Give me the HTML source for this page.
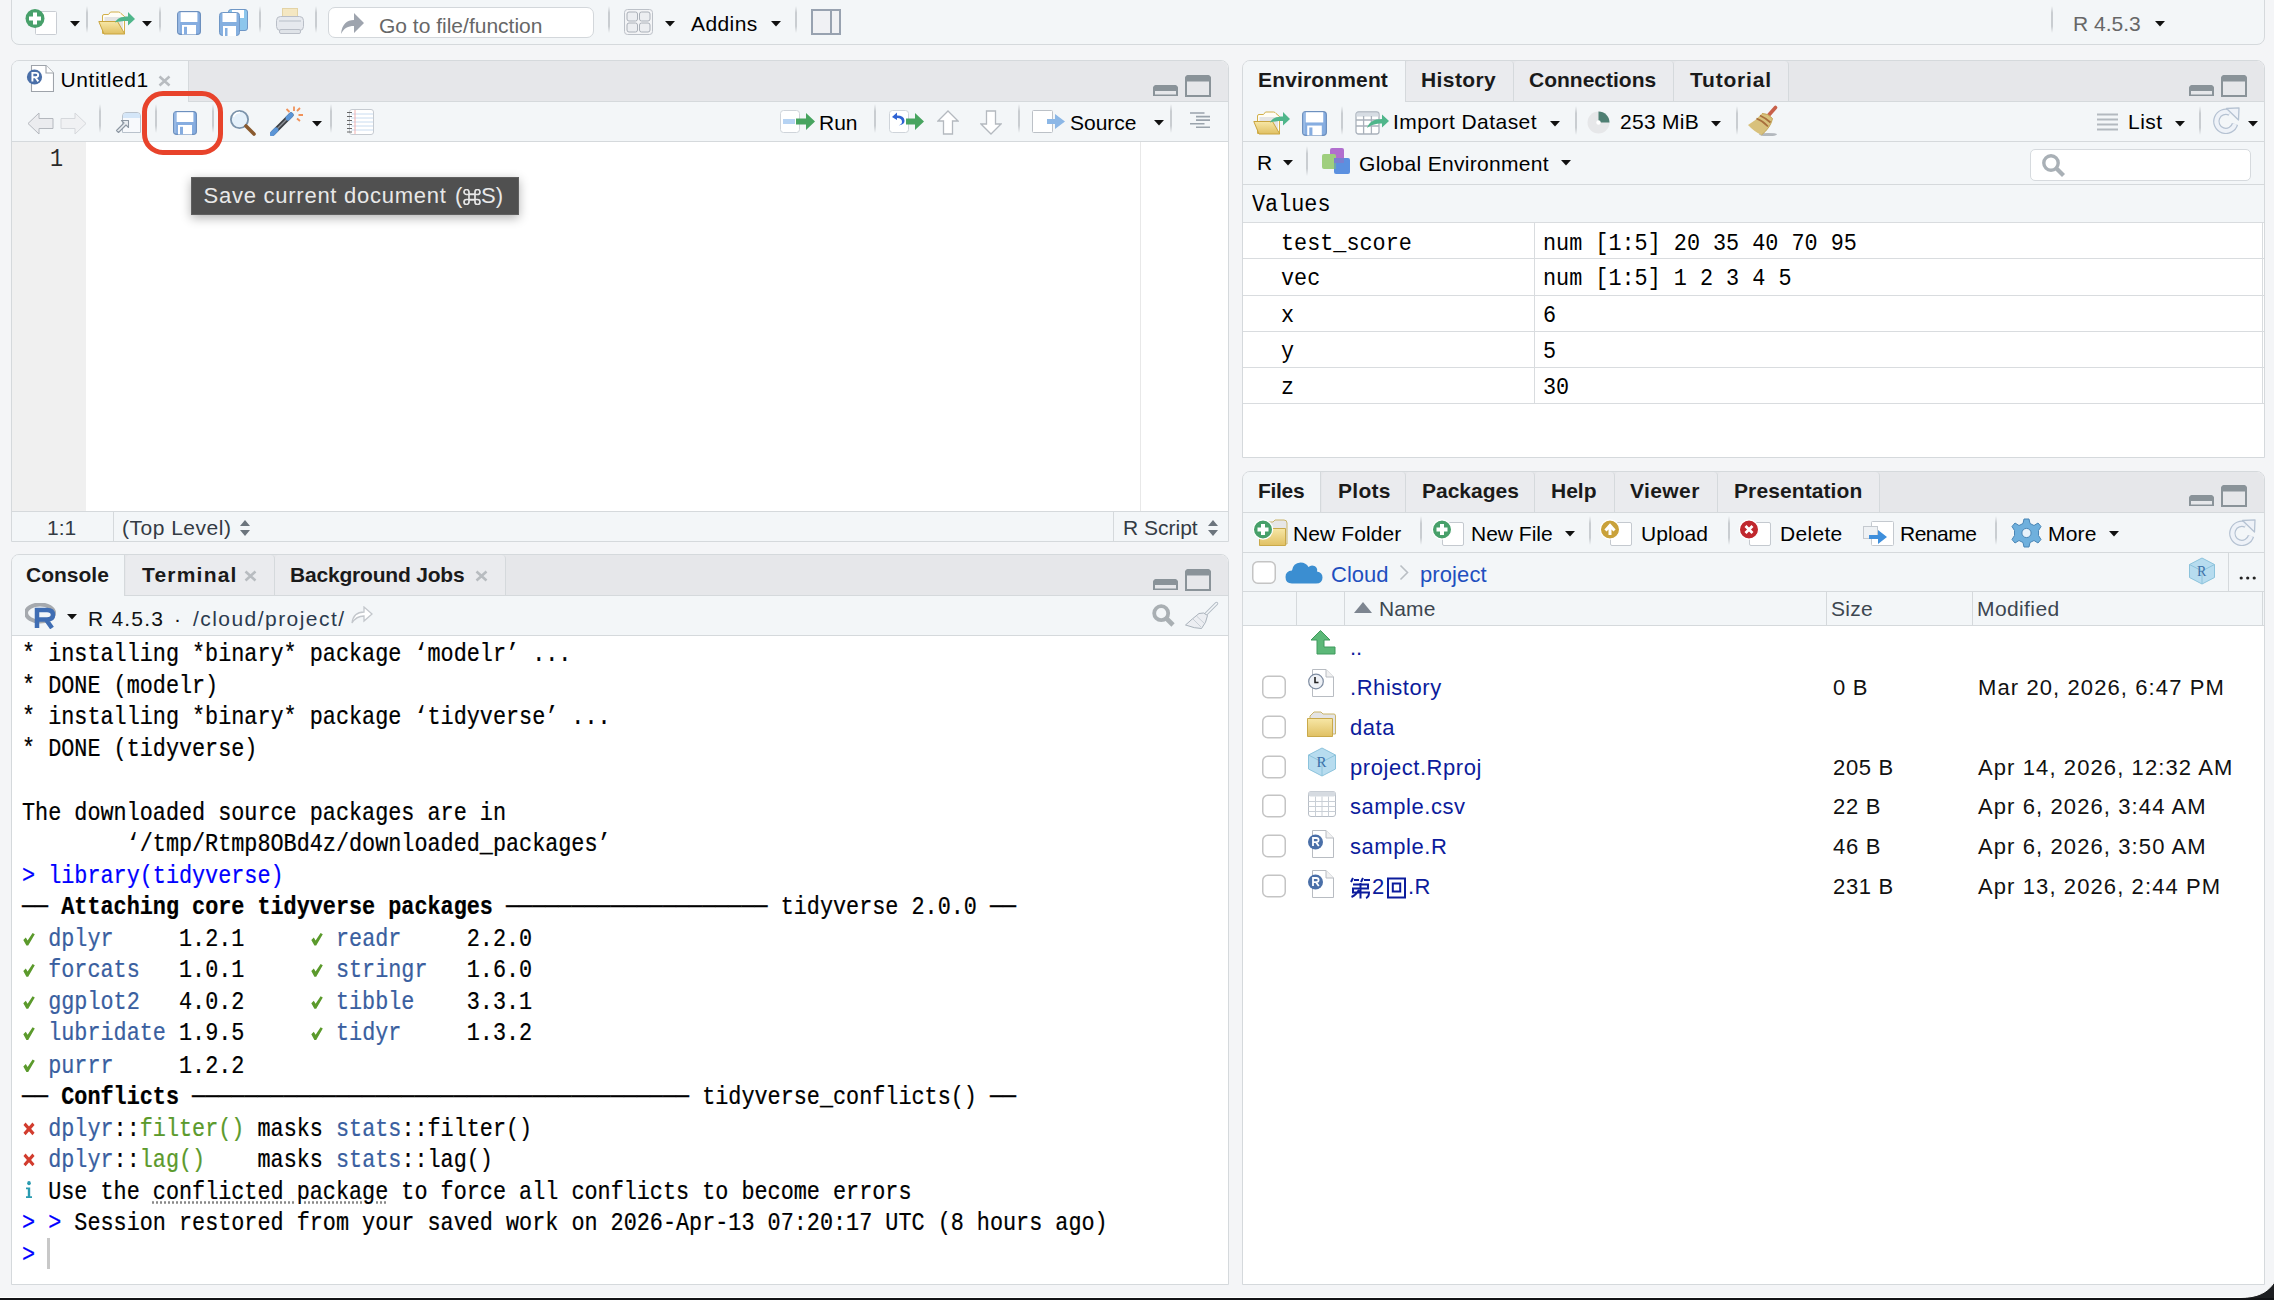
<!DOCTYPE html>
<html><head><meta charset="utf-8">
<style>
*{box-sizing:border-box;margin:0;padding:0}
html,body{width:2274px;height:1300px;overflow:hidden}
body{position:relative;background:#f4f5f7;font-family:"Liberation Sans",sans-serif;font-size:20px;color:#000}
.a{position:absolute}
.mono{font-family:"Liberation Mono",monospace}
.pane{position:absolute;border:1px solid #d5d9dc;background:#fff;overflow:hidden}
.tabbar{position:absolute;left:0;right:0;top:0;background:#e6e7ea;border-bottom:1px solid #d5d9dc}
.tb{position:absolute;left:0;right:0;background:#f3f6f8;border-bottom:1px solid #d5d9dc}
.tab{position:absolute;top:0;bottom:-1px;font-weight:bold;font-size:20px;color:#1a1a1a;border-right:1px solid #d5d9dc;background:#e6e7ea}
.tab.act{background:#f3f6f8}
.sep{position:absolute;width:2px;background:linear-gradient(#f3f6f8,#c9cdd1 25%,#c9cdd1 75%,#f3f6f8)}
.t{position:absolute;white-space:pre}

.con{position:absolute;left:22px;top:638.5px;-webkit-text-stroke:0.2px currentColor;font-family:"Liberation Mono",monospace;font-size:21.8px;line-height:27.5px;white-space:pre;color:#000;transform:scaleY(1.15);transform-origin:0 0}
.con b{font-weight:bold}
.con u{text-decoration:underline dotted #888;text-underline-offset:3px}
.ck{display:inline-block;position:relative;width:13.08px;height:12px;font-style:normal}

.envt{position:absolute;font-size:21.8px;line-height:32.3px;white-space:pre;color:#000;transform:scaleY(1.12);transform-origin:0 0}
</style></head>
<body>

<svg width="0" height="0" style="position:absolute">
<defs>
 <linearGradient id="gFolder" x1="0" y1="0" x2="0" y2="1"><stop offset="0" stop-color="#f7e7a6"/><stop offset="1" stop-color="#e0c063"/></linearGradient>
 <symbol id="caret" viewBox="0 0 10 6"><path d="M0 0H10L5 5.5Z" fill="#111"/></symbol>
 <symbol id="floppy" viewBox="0 0 24 24"><rect x="0.6" y="0.6" width="22.8" height="22.8" rx="3.2" fill="#86ade0" stroke="#6d90be" stroke-width="1.2"/><rect x="3.6" y="1.2" width="16.8" height="9.8" fill="#fff"/><rect x="5" y="14" width="14" height="9.4" fill="#fff"/><rect x="7" y="15.8" width="3" height="7.6" fill="#86ade0"/><rect x="1.5" y="1.2" width="1" height="21" fill="#a9c6ea"/></symbol>

 <symbol id="minbtn" viewBox="0 0 25 11"><path d="M1 10.5V4Q1 1 4 1H21Q24 1 24 4V10.5Z" fill="none" stroke="#8a9399" stroke-width="2"/><path d="M1 5V4Q1 1 4 1H21Q24 1 24 4V5Z" fill="#8a9399" stroke="#8a9399" stroke-width="2"/></symbol>
 <symbol id="maxbtn" viewBox="0 0 26 22"><path d="M1 21V4Q1 1 4 1H22Q25 1 25 4V21Z" fill="none" stroke="#8a9399" stroke-width="2"/><path d="M1 5.5V4Q1 1 4 1H22Q25 1 25 4V5.5Z" fill="#8a9399" stroke="#8a9399" stroke-width="2"/></symbol>
 <symbol id="rdoc" viewBox="0 0 28 28"><path d="M5.5 1.5H20L27.5 9V27.5H5.5Z" fill="#fff" stroke="#9ea3aa" stroke-width="1.1"/><path d="M20 1.5V9H27.5" fill="#fff" stroke="#9ea3aa" stroke-width="1.1"/><circle cx="8.5" cy="13" r="7.6" fill="#4a6fa8"/><path d="M6.4 17.4V8.9H9.6Q12.2 8.9 12.2 11.1Q12.2 13.3 9.6 13.3H6.4M9.3 13.3L12.3 17.4" fill="none" stroke="#fff" stroke-width="1.9"/></symbol>
 <symbol id="updown" viewBox="0 0 10 16"><path d="M0 6L5 0L10 6Z M0 10L5 16L10 10Z" fill="#6c757d"/></symbol>

 <symbol id="chk" viewBox="0 0 12 12"><path d="M0.3 6.8L2.8 4.6L4.6 7.2L9.6 0.6L11.8 1.8L5.2 11.6H3.4Z" fill="#5b9a2c"/></symbol>
 <symbol id="xx" viewBox="0 0 12 12"><path d="M1.5 1.5L10.5 10.5M10.5 1.5L1.5 10.5" stroke="#d23c2e" stroke-width="3"/></symbol>
 <symbol id="closex" viewBox="0 0 13 12"><path d="M1.5 1.5L11.5 10.5M11.5 1.5L1.5 10.5" stroke="#b8bcc0" stroke-width="2.6"/></symbol>

 <symbol id="cbox" viewBox="0 0 24 23"><rect x="0.75" y="0.75" width="22.5" height="21.5" rx="5" fill="#fff" stroke="#c4c4c4" stroke-width="1.5"/></symbol>
 <symbol id="docpg" viewBox="0 0 26 28"><path d="M4.5 0.5H18L25.5 8V27.5H4.5Z" fill="#fff" stroke="#b8bcc2"/><path d="M18 0.5V8H25.5" fill="#f1f1f1" stroke="#b8bcc2"/></symbol>
 <symbol id="refresh" viewBox="0 0 28 27"><path d="M23 17A9.5 9.5 0 1 1 18 5.8" fill="none" stroke="#b5c2d2" stroke-width="6.5"/><path d="M23 17A9.5 9.5 0 1 1 18 5.8" fill="none" stroke="#eef2f8" stroke-width="4"/><path d="M14.5 1.5L27 0.8L26.5 13Z" fill="#eef2f8" stroke="#b5c2d2" stroke-width="1.3" stroke-linejoin="round"/></symbol>
 <symbol id="sep" viewBox="0 0 2 28"><rect width="2" height="28" fill="#d6d9dc"/></symbol>
</defs></svg>
<!-- bottom black strip -->


<!-- main toolbar -->
<div class="a" style="left:11px;top:-10px;width:2254px;height:55px;border:1px solid #d5d9dc;border-radius:8px;background:#f3f6f8"></div>

<!-- Source pane -->
<div class="pane" style="left:11px;top:60px;width:1218px;height:482px;border-radius:8px 8px 0 0;">
  <div class="tabbar" style="height:41px"></div>
  <div class="tb" style="top:41px;height:40px"></div>
  <div class="a" style="left:0;top:81px;width:74px;height:370px;background:#f0f0f0"></div>
  <div class="a" style="left:1128px;top:81px;width:1px;height:370px;background:#e8e8e8"></div>
  <div class="tb" style="top:450px;height:31px;border-top:1px solid #d5d9dc;border-bottom:none"></div>
</div>

<!-- Console pane -->
<div class="pane" style="left:11px;top:554px;width:1218px;height:731px;border-radius:8px 8px 0 0;">
  <div class="tabbar" style="height:41px"></div>
  <div class="tb" style="top:41px;height:40px"></div>
</div>

<!-- Environment pane -->
<div class="pane" style="left:1242px;top:60px;width:1023px;height:398px;border-radius:8px 8px 0 0;">
  <div class="tabbar" style="height:41px"></div>
  <div class="tb" style="top:41px;height:40px"></div>
  <div class="tb" style="top:81px;height:43px"></div>
</div>

<!-- Files pane -->
<div class="pane" style="left:1242px;top:471px;width:1023px;height:814px;border-radius:8px 8px 0 0;">
  <div class="tabbar" style="height:41px"></div>
  <div class="tb" style="top:41px;height:40px"></div>
  <div class="tb" style="top:81px;height:39px"></div>
  <div class="tb" style="top:120px;height:34px"></div>
</div>
</div>


<!-- inactive tabs -->
<div class="a" style="left:1406px;top:61px;width:108px;height:40px;background:#eaebee;border-right:1px solid #d5d9dc;border-radius:4px 4px 0 0"></div>
<div class="a" style="left:1514px;top:61px;width:160px;height:40px;background:#eaebee;border-right:1px solid #d5d9dc;border-radius:4px 4px 0 0"></div>
<div class="a" style="left:1674px;top:61px;width:115px;height:40px;background:#eaebee;border-right:1px solid #d5d9dc;border-radius:4px 4px 0 0"></div>
<div class="a" style="left:1322px;top:472px;width:84px;height:40px;background:#eaebee;border-right:1px solid #d5d9dc;border-radius:4px 4px 0 0"></div>
<div class="a" style="left:1406px;top:472px;width:129px;height:40px;background:#eaebee;border-right:1px solid #d5d9dc;border-radius:4px 4px 0 0"></div>
<div class="a" style="left:1535px;top:472px;width:80px;height:40px;background:#eaebee;border-right:1px solid #d5d9dc;border-radius:4px 4px 0 0"></div>
<div class="a" style="left:1615px;top:472px;width:103px;height:40px;background:#eaebee;border-right:1px solid #d5d9dc;border-radius:4px 4px 0 0"></div>
<div class="a" style="left:1718px;top:472px;width:162px;height:40px;background:#eaebee;border-right:1px solid #d5d9dc;border-radius:4px 4px 0 0"></div>
<div class="a" style="left:126px;top:555px;width:149px;height:40px;background:#eaebee;border-right:1px solid #d5d9dc;border-radius:4px 4px 0 0"></div>
<div class="a" style="left:275px;top:555px;width:231px;height:40px;background:#eaebee;border-right:1px solid #d5d9dc;border-radius:4px 4px 0 0"></div>
<!-- main toolbar content -->
<svg class="a" style="left:24px;top:8px" width="34" height="28" viewBox="0 0 34 28"><rect x="11.5" y="3.5" width="21" height="23" rx="1" fill="#fff" stroke="#c9cdd3"/><circle cx="11" cy="10.5" r="9.5" fill="#47a06a"/><path d="M11 4.5V16.5M5 10.5H17" stroke="#fff" stroke-width="4"/></svg>
<svg class="a" style="left:70px;top:21px" width="10" height="6"><use href="#caret"/></svg>
<div class="sep" style="left:86px;top:6px;height:27px"></div>
<svg class="a" style="left:98px;top:10px" width="38" height="26" viewBox="0 0 38 26"><path d="M4.5 23.5V6Q4.5 4.5 6 4.5H10.5L12.5 2H20.5Q22 2 23 3.5L26.5 6.5V23.5Z" fill="#fffdf5" stroke="#d2b04a"/><path d="M6.5 23V7H25V23Z" fill="#e4e4e4"/><path d="M0.8 11.5H19.5L26.8 24H6Z" fill="url(#gFolder)" stroke="#c9a43e" stroke-linejoin="round"/><path d="M17 12.5C19 8.5 23 6.5 30 6.5V2L37 9L30 15.5V11C24 11 20 11.5 17 12.5Z" fill="#4fb68b"/></svg>
<svg class="a" style="left:142px;top:21px" width="10" height="6"><use href="#caret"/></svg>
<div class="sep" style="left:159px;top:6px;height:27px"></div>
<svg class="a" style="left:177px;top:11px" width="24" height="24"><use href="#floppy"/></svg>
<svg class="a" style="left:219px;top:9px" width="29" height="27" viewBox="0 0 29 27"><rect x="9.5" y="0.5" width="19" height="21" rx="2.5" fill="#8cc6ec" stroke="#6f97c6"/><rect x="13" y="1" width="12" height="8" fill="#fff"/><g transform="translate(0,3)"><rect x="0.5" y="0.5" width="20" height="23" rx="3" fill="#86b0e0" stroke="#6f97c6"/><rect x="3.5" y="1" width="14" height="9" fill="#fff"/><rect x="4" y="14" width="13" height="10" fill="#fff"/><rect x="6" y="16" width="2.5" height="8" fill="#86b0e0"/></g></svg>
<div class="sep" style="left:259px;top:6px;height:27px"></div>
<svg class="a" style="left:276px;top:8px" width="28" height="26" viewBox="0 0 28 26"><rect x="6.5" y="0.5" width="15" height="12" fill="#f4e7c2" stroke="#e3d3a5"/><rect x="0.5" y="8.5" width="27" height="14" rx="4" fill="#e6e9ee" stroke="#b9bec7"/><rect x="3" y="12" width="22" height="2" fill="#cfd4db"/><rect x="3.5" y="21.5" width="21" height="4" rx="1.5" fill="#dfe3e8" stroke="#b9bec7"/></svg>
<div class="sep" style="left:315px;top:6px;height:27px"></div>
<div class="a" style="left:328px;top:7px;width:266px;height:31px;border:1px solid #d3d7db;border-radius:7px;background:#fff"></div>
<svg class="a" style="left:341px;top:12px" width="25" height="23" viewBox="0 0 25 23"><path d="M0 22 C1 12 6 8 13 8 V1 L23 11 L13 21 V14 C7 14 3 16 0 22Z" fill="#9ea4ae"/></svg>
<div class="t" style="left:379px;top:14.5px;font-size:21px;line-height:21px;color:#676767">Go to file/function</div>
<div class="sep" style="left:608px;top:6px;height:27px"></div>
<svg class="a" style="left:624px;top:9px" width="29" height="26" viewBox="0 0 29 26"><rect x="0.5" y="0.5" width="28" height="25" rx="3" fill="#f3f4f6" stroke="#bcc1c8"/><rect x="3" y="3" width="10.5" height="9" rx="2" fill="#eceef1" stroke="#aab0b8"/><rect x="15.5" y="3" width="10.5" height="9" rx="2" fill="#eceef1" stroke="#aab0b8"/><rect x="3" y="14" width="10.5" height="9" rx="2" fill="#eceef1" stroke="#aab0b8"/><rect x="15.5" y="14" width="10.5" height="9" rx="2" fill="#eceef1" stroke="#aab0b8"/></svg>
<svg class="a" style="left:665px;top:21px" width="10" height="6"><use href="#caret"/></svg>
<div class="t" style="left:691px;top:13px;font-size:21px;line-height:21px;color:#000;letter-spacing:0.4px">Addins</div>
<svg class="a" style="left:771px;top:21px" width="10" height="6"><use href="#caret"/></svg>
<div class="sep" style="left:795px;top:6px;height:27px"></div>
<svg class="a" style="left:811px;top:9px" width="30" height="26" viewBox="0 0 30 26"><rect x="1" y="1" width="28" height="24" fill="#f0f1f4" stroke="#98a2b0" stroke-width="2"/><rect x="19" y="1" width="2" height="24" fill="#98a2b0"/></svg>
<div class="sep" style="left:2051px;top:6px;height:27px"></div>
<div class="t" style="left:2073px;top:13px;font-size:21px;line-height:21px;color:#676767">R 4.5.3</div>
<svg class="a" style="left:2155px;top:21px" width="10" height="6"><use href="#caret"/></svg>


<!-- source pane content -->
<div class="a" style="left:12px;top:61px;width:177px;height:41px;background:#f3f6f8;border-right:1px solid #d5d9dc;border-radius:7px 0 0 0"></div>
<svg class="a" style="left:26px;top:64px" width="28" height="28"><use href="#rdoc"/></svg>
<div class="t" style="left:60.5px;top:69px;font-size:21px;line-height:21px;letter-spacing:0.6px">Untitled1</div>
<svg class="a" style="left:158px;top:75px" width="13" height="12" viewBox="0 0 13 12"><path d="M1.5 1.5L11.5 10.5M11.5 1.5L1.5 10.5" stroke="#b8bcc0" stroke-width="2.6"/></svg>
<svg class="a" style="left:1153px;top:85px" width="25" height="11"><use href="#minbtn"/></svg>
<svg class="a" style="left:1185px;top:75px" width="26" height="22"><use href="#maxbtn"/></svg>
<!-- source toolbar -->
<svg class="a" style="left:27px;top:112px" width="28" height="23" viewBox="0 0 28 23"><path d="M1 11.5L12 1V6.5H26V16.5H12V22Z" fill="#ebecef" stroke="#b4b8be"/></svg>
<svg class="a" style="left:59px;top:112px" width="28" height="23" viewBox="0 0 28 23"><path d="M27 11.5L16 1V6.5H2V16.5H16V22Z" fill="#f0f1f3" stroke="#d5d8dc"/></svg>
<div class="sep" style="left:99px;top:104px;height:29px;width:2px"></div>
<svg class="a" style="left:114px;top:111px" width="28" height="23" viewBox="0 0 28 23"><path d="M8.5 21.5V5Q8.5 1.5 12 1.5H23Q26.5 1.5 26.5 5V21.5Z" fill="#f7f9fc" stroke="#b9c2cc"/><path d="M9 7V5Q9 2 12 2H23Q26 2 26 5V7Z" fill="#d4e6f8"/><path d="M2.5 19.5L10 12L7.5 9.5H14.5V16.5L12 14L4.5 21.5Z" fill="#e9edf1" stroke="#8d97a2" stroke-width="1.1" stroke-linejoin="round"/></svg>
<div class="sep" style="left:155px;top:104px;height:29px"></div>
<svg class="a" style="left:173px;top:111px" width="24" height="24"><use href="#floppy"/></svg>
<div class="sep" style="left:212px;top:104px;height:29px"></div>
<svg class="a" style="left:229px;top:109px" width="28" height="27" viewBox="0 0 28 27"><circle cx="10.5" cy="10.5" r="8.6" fill="#e4f0fa" stroke="#7a92aa" stroke-width="1.8"/><path d="M4.5 8A6.5 6.5 0 0 1 11 3.5" fill="none" stroke="#fff" stroke-width="1.5"/><path d="M17 17L25 25" stroke="#8a5a2e" stroke-width="3.6" stroke-linecap="round"/></svg>
<svg class="a" style="left:270px;top:105px" width="34" height="31" viewBox="0 0 34 31"><path d="M3 28L21 10" stroke="#3c3f44" stroke-width="5" stroke-linecap="round"/><path d="M3.5 27.5L20.5 10.5" stroke="#8b9096" stroke-width="1.5"/><path d="M2 29L6 25" stroke="#5b95d6" stroke-width="5" stroke-linecap="round"/><path d="M18 13L21 10" stroke="#5b95d6" stroke-width="5" stroke-linecap="round"/><path d="M24 1.5V6M30 3L27 6M33 10H28.5M30 16L27 13.5M16.5 4L19.5 7" stroke="#f0925a" stroke-width="1.8"/></svg>
<svg class="a" style="left:312px;top:121px" width="10" height="6"><use href="#caret"/></svg>
<div class="sep" style="left:330px;top:104px;height:29px"></div>
<svg class="a" style="left:346px;top:109px" width="28" height="26" viewBox="0 0 28 26"><rect x="3.5" y="0.5" width="24" height="25" rx="2.5" fill="#fff" stroke="#c6cbd1"/><path d="M5 5H27M5 9H27M5 13H27M5 17H27M5 21H27" stroke="#c9dcf0" stroke-width="1"/><path d="M9 1V25" stroke="#f0a0a0" stroke-width="0.8"/><path d="M1 3.5H6M1 7.5H6M1 11.5H6M1 15.5H6M1 19.5H6M1 23H6" stroke="#666" stroke-width="1.1"/></svg>
<svg class="a" style="left:780px;top:110px" width="36" height="23" viewBox="0 0 36 23"><rect x="0.5" y="0.5" width="19" height="22" rx="3" fill="#fff" stroke="#cfd4da"/><rect x="3" y="9" width="12" height="5" fill="#b6d3f3"/><path d="M16 8.5H26V3L35 11.5L26 20V14.5H16Z" fill="#47a45f"/></svg>
<div class="t" style="left:819px;top:112px;font-size:21px;line-height:21px">Run</div>
<div class="sep" style="left:874px;top:104px;height:29px"></div>
<svg class="a" style="left:889px;top:110px" width="36" height="23" viewBox="0 0 36 23"><rect x="0.5" y="0.5" width="19" height="22" rx="3" fill="#fff" stroke="#cfd4da"/><path d="M8 2.5L3 7L8 10V8Q13 8 13 12Q13 14 9.5 15.5Q16 14.5 15.5 10.5Q15 5.5 8 5.5Z" fill="#2f63d4"/><path d="M17 8.5H26V3L35 11.5L26 20V14.5H17Z" fill="#47a45f"/></svg>
<svg class="a" style="left:937px;top:110px" width="22" height="25" viewBox="0 0 22 25"><path d="M11 1L21 11H15.5V24H6.5V11H1Z" fill="#fff" stroke="#b4b9bf" stroke-width="1.3"/></svg>
<svg class="a" style="left:980px;top:110px" width="22" height="25" viewBox="0 0 22 25"><path d="M11 24L21 14H15.5V1H6.5V14H1Z" fill="#fff" stroke="#b4b9bf" stroke-width="1.3"/></svg>
<div class="sep" style="left:1018px;top:104px;height:29px"></div>
<svg class="a" style="left:1032px;top:110px" width="34" height="23" viewBox="0 0 34 23"><rect x="0.5" y="0.5" width="20" height="22" rx="1" fill="#fff" stroke="#bcc1c7"/><path d="M15 9H23V4L33 11.5L23 19V14H15Z" fill="#8cb7e6"/></svg>
<div class="t" style="left:1070px;top:112px;font-size:21px;line-height:21px">Source</div>
<svg class="a" style="left:1154px;top:120px" width="10" height="6"><use href="#caret"/></svg>
<div class="sep" style="left:1170px;top:104px;height:29px"></div>
<svg class="a" style="left:1190px;top:112px" width="21" height="17" viewBox="0 0 21 17"><path d="M0 1H14.5M6 4.6H20M6 8.1H20M0 11.7H14.5M6 15.2H20" stroke="#9aa3ac" stroke-width="1.6"/></svg>
<!-- gutter & status -->
<div class="t mono" style="left:50px;top:148px;font-size:21.8px;line-height:21.8px;color:#2a2a2a;transform:scaleY(1.15);transform-origin:0 0">1</div>
<div class="t" style="left:47px;top:517px;font-size:21px;line-height:21px;color:#333b44">1:1</div>
<div class="a" style="left:113px;top:512px;width:1px;height:29px;background:#d5d9dc"></div>
<div class="t" style="left:122px;top:517px;font-size:21px;line-height:21px;color:#333b44;letter-spacing:0.5px">(Top Level)</div>
<svg class="a" style="left:240px;top:520px" width="10" height="16"><use href="#updown"/></svg>
<div class="a" style="left:1113px;top:512px;width:1px;height:29px;background:#d5d9dc"></div>
<div class="t" style="left:1123px;top:517px;font-size:21px;line-height:21px;color:#333b44">R Script</div>
<svg class="a" style="left:1208px;top:520px" width="10" height="16"><use href="#updown"/></svg>
<!-- tooltip -->
<div class="a" style="left:191px;top:177px;width:328px;height:38px;background:#505050;border:1px solid #606060;box-shadow:0 3px 10px rgba(0,0,0,0.3)"></div>
<div class="t" style="left:203.5px;top:184.5px;font-size:22px;line-height:22px;color:#e8e8e8;letter-spacing:0.75px">Save current document</div>
<div class="t" style="left:455px;top:184.5px;font-size:22px;line-height:22px;color:#e8e8e8">(</div>
<svg class="a" style="left:463px;top:189px" width="18" height="16" viewBox="0 0 18 16"><path d="M6 5H12V11H6ZM6 5V3A2.5 2.5 0 1 0 3.5 5.5H14.5A2.5 2.5 0 1 0 12 3V13A2.5 2.5 0 1 0 14.5 10.5H3.5A2.5 2.5 0 1 0 6 13Z" fill="none" stroke="#e8e8e8" stroke-width="1.7"/></svg>
<div class="t" style="left:481px;top:184.5px;font-size:22px;line-height:22px;color:#e8e8e8">S)</div>
<!-- red highlight -->
<div class="a" style="left:142px;top:91px;width:81px;height:64px;border:5px solid #e8432b;border-radius:21px"></div>


<!-- console content -->
<div class="a" style="left:12px;top:555px;width:113px;height:41px;background:#f3f6f8;border-right:1px solid #d5d9dc;border-radius:7px 0 0 0"></div>
<div class="t" style="left:26px;top:564px;font-size:21px;line-height:21px;font-weight:bold;color:#1a1a1a">Console</div>
<div class="t" style="left:142px;top:564px;font-size:21px;line-height:21px;font-weight:bold;color:#1a1a1a;letter-spacing:1.2px">Terminal</div>
<svg class="a" style="left:244px;top:570px" width="13" height="12"><use href="#closex"/></svg>
<div class="t" style="left:290px;top:564px;font-size:21px;line-height:21px;font-weight:bold;color:#1a1a1a;letter-spacing:-0.2px">Background Jobs</div>
<svg class="a" style="left:475px;top:570px" width="13" height="12"><use href="#closex"/></svg>
<svg class="a" style="left:1153px;top:579px" width="25" height="11"><use href="#minbtn"/></svg>
<svg class="a" style="left:1185px;top:569px" width="26" height="22"><use href="#maxbtn"/></svg>
<!-- console toolbar -->
<svg class="a" style="left:25px;top:603px" width="34" height="26" viewBox="0 0 34 26"><ellipse cx="15" cy="10" rx="14" ry="8.5" fill="none" stroke="#a5a9ae" stroke-width="4"/><path d="M12 25V7H22Q28 7 28 12Q28 16.5 22 16.5H12M21 16.5L27 25" fill="none" stroke="#3f6db3" stroke-width="4.5"/></svg>
<svg class="a" style="left:67px;top:614px" width="10" height="6"><use href="#caret"/></svg>
<div class="t" style="left:88px;top:608px;font-size:21px;line-height:21px;color:#111;letter-spacing:1.2px">R 4.5.3</div>
<div class="t" style="left:174px;top:608px;font-size:21px;line-height:21px;color:#111">·</div>
<div class="t" style="left:193px;top:608px;font-size:21px;line-height:21px;color:#2b3a4e;letter-spacing:1.45px">/cloud/project/</div>
<svg class="a" style="left:351px;top:606px" width="22" height="18" viewBox="0 0 22 18"><path d="M1 17C2 9 7 6 13 6V1L21 8L13 15V10C8 10 4 12 1 17Z" fill="#fff" stroke="#c3c7cc" stroke-width="1.3"/></svg>
<svg class="a" style="left:1152px;top:604px" width="24" height="24" viewBox="0 0 24 24"><circle cx="9.2" cy="9.2" r="7" fill="none" stroke="#a9afb3" stroke-width="3.8"/><path d="M14 14L21 21" stroke="#a9afb3" stroke-width="4.6"/></svg>
<svg class="a" style="left:1184px;top:601px" width="35" height="28" viewBox="0 0 35 28"><path d="M21.5 13.5L32.5 2.5" stroke="#b3bcc5" stroke-width="3.4" stroke-linecap="round"/><path d="M21.5 13.5L32.5 2.5" stroke="#f4f7fa" stroke-width="1.6" stroke-linecap="round"/><path d="M15 12.5Q20 10.5 23.5 14.5Q22.5 21.5 17.5 27.5Q11 27.5 1.5 24Q8 18 15 12.5Z" fill="#eceef2" stroke="#a9b2bb" stroke-width="1"/><path d="M9 18L17 26M12.5 15L20 22" stroke="#c5ccd3" stroke-width="0.9"/></svg>
<div class="con">* installing *binary* package ‘modelr’ ...
* DONE (modelr)
* installing *binary* package ‘tidyverse’ ...
* DONE (tidyverse)

The downloaded source packages are in
        ‘/tmp/Rtmp8OBd4z/downloaded_packages’
<span style="color:#0000ff">&gt; library(tidyverse)</span>
── <b>Attaching core tidyverse packages</b> ──────────────────── tidyverse 2.0.0 ──
<i class="ck"><svg width="12" height="12" style="position:absolute;left:1px;top:0"><use href="#chk"/></svg></i> <span style="color:#3a5fa0">dplyr</span>     1.2.1     <i class="ck"><svg width="12" height="12" style="position:absolute;left:1px;top:0"><use href="#chk"/></svg></i> <span style="color:#3a5fa0">readr</span>     2.2.0
<i class="ck"><svg width="12" height="12" style="position:absolute;left:1px;top:0"><use href="#chk"/></svg></i> <span style="color:#3a5fa0">forcats</span>   1.0.1     <i class="ck"><svg width="12" height="12" style="position:absolute;left:1px;top:0"><use href="#chk"/></svg></i> <span style="color:#3a5fa0">stringr</span>   1.6.0
<i class="ck"><svg width="12" height="12" style="position:absolute;left:1px;top:0"><use href="#chk"/></svg></i> <span style="color:#3a5fa0">ggplot2</span>   4.0.2     <i class="ck"><svg width="12" height="12" style="position:absolute;left:1px;top:0"><use href="#chk"/></svg></i> <span style="color:#3a5fa0">tibble</span>    3.3.1
<i class="ck"><svg width="12" height="12" style="position:absolute;left:1px;top:0"><use href="#chk"/></svg></i> <span style="color:#3a5fa0">lubridate</span> 1.9.5     <i class="ck"><svg width="12" height="12" style="position:absolute;left:1px;top:0"><use href="#chk"/></svg></i> <span style="color:#3a5fa0">tidyr</span>     1.3.2
<i class="ck"><svg width="12" height="12" style="position:absolute;left:1px;top:0"><use href="#chk"/></svg></i> <span style="color:#3a5fa0">purrr</span>     1.2.2
── <b>Conflicts</b> ────────────────────────────────────── tidyverse_conflicts() ──
<i class="ck"><svg width="12" height="12" style="position:absolute;left:1px;top:0"><use href="#xx"/></svg></i> <span style="color:#3a5fa0">dplyr</span>::<span style="color:#5b9a2c">filter()</span> masks <span style="color:#3a5fa0">stats</span>::filter()
<i class="ck"><svg width="12" height="12" style="position:absolute;left:1px;top:0"><use href="#xx"/></svg></i> <span style="color:#3a5fa0">dplyr</span>::<span style="color:#5b9a2c">lag()</span>    masks <span style="color:#3a5fa0">stats</span>::lag()
<i class="ck"><svg width="12" height="16" style="position:absolute;left:1px;top:-4px" viewBox="0 0 12 16"><circle cx="6" cy="2.2" r="1.8" fill="#2a9bb0"/><path d="M3 6H7.2V13.5H9V15H3V13.5H4.8V7.5H3Z" fill="#2a9bb0"/></svg></i> Use the <u>conflicted package</u> to force all conflicts to become errors
<span style="color:#0000ff">&gt; &gt;</span> Session restored from your saved work on 2026-Apr-13 07:20:17 UTC (8 hours ago)
<span style="color:#0000ff">&gt;</span> </div>
<div class="a" style="left:47px;top:1238px;width:3px;height:31px;background:#c8c8c8"></div>


<!-- ENV pane content -->
<div class="a" style="left:1243px;top:61px;width:163px;height:41px;background:#f3f6f8;border-right:1px solid #d5d9dc;border-radius:7px 0 0 0"></div>
<div class="t" style="left:1258px;top:69px;font-size:21px;line-height:21px;font-weight:bold;color:#1a1a1a;letter-spacing:0.15px">Environment</div>
<div class="t" style="left:1421px;top:69px;font-size:21px;line-height:21px;font-weight:bold;color:#1a1a1a;letter-spacing:0.4px">History</div>
<div class="t" style="left:1529px;top:69px;font-size:21px;line-height:21px;font-weight:bold;color:#1a1a1a">Connections</div>
<div class="t" style="left:1690px;top:69px;font-size:21px;line-height:21px;font-weight:bold;color:#1a1a1a;letter-spacing:0.8px">Tutorial</div>
<svg class="a" style="left:2189px;top:85px" width="25" height="11"><use href="#minbtn"/></svg>
<svg class="a" style="left:2221px;top:75px" width="26" height="22"><use href="#maxbtn"/></svg>
<!-- env toolbar 1 -->
<svg class="a" style="left:1253px;top:110px" width="38" height="26" viewBox="0 0 38 26"><path d="M4.5 23.5V6Q4.5 4.5 6 4.5H10.5L12.5 2H20.5Q22 2 23 3.5L26.5 6.5V23.5Z" fill="#fffdf5" stroke="#d2b04a"/><path d="M6.5 23V7H25V23Z" fill="#e4e4e4"/><path d="M0.8 11.5H19.5L26.8 24H6Z" fill="url(#gFolder)" stroke="#c9a43e" stroke-linejoin="round"/><path d="M17 12.5C19 8.5 23 6.5 30 6.5V2L37 9L30 15.5V11C24 11 20 11.5 17 12.5Z" fill="#4fb68b"/></svg>
<svg class="a" style="left:1302px;top:111px" width="25" height="25"><use href="#floppy"/></svg>
<div class="sep" style="left:1341px;top:106px;height:29px"></div>
<svg class="a" style="left:1355px;top:111px" width="36" height="24" viewBox="0 0 36 24"><rect x="1" y="1" width="23" height="22" rx="2.5" fill="#fff" stroke="#a9b1bb" stroke-width="1.3"/><rect x="1.6" y="1.6" width="21.8" height="4" fill="#d6dce3"/><path d="M1 9H24M1 15H24M8.6 5V23M16.4 5V23" stroke="#a9b1bb" stroke-width="1.3"/><path d="M12 17C14 11 19 8 27 8V3.5L34 10L27 16.5V12.5C20 12.5 16 14 12 17Z" fill="#4fb68b"/></svg>
<div class="t" style="left:1393px;top:111px;font-size:21px;line-height:21px;letter-spacing:0.45px">Import Dataset</div>
<svg class="a" style="left:1550px;top:121px" width="10" height="6"><use href="#caret"/></svg>
<div class="sep" style="left:1575px;top:106px;height:29px"></div>
<svg class="a" style="left:1587px;top:111px" width="24" height="23" viewBox="0 0 24 23"><circle cx="11.5" cy="11.5" r="11" fill="#e6e7e9"/><path d="M11.5 11.5V0.5A11 11 0 0 1 22.5 11.5Z" fill="#4e7f73"/><circle cx="11.5" cy="11.5" r="2.2" fill="#fff"/></svg>
<div class="t" style="left:1620px;top:111px;font-size:21px;line-height:21px;letter-spacing:0.3px">253 MiB</div>
<svg class="a" style="left:1711px;top:121px" width="10" height="6"><use href="#caret"/></svg>
<div class="sep" style="left:1736px;top:106px;height:29px"></div>
<svg class="a" style="left:1748px;top:105px" width="30" height="31" viewBox="0 0 30 31"><ellipse cx="20" cy="29.5" rx="9" ry="1.6" fill="rgba(60,70,80,0.35)"/><path d="M19.5 11.5L27.5 2.5" stroke="#c8604a" stroke-width="3.6" stroke-linecap="round"/><path d="M14 8.5Q20 8 24.5 13.5Q23 22 13.5 30Q6 26.5 0 20Q8 15.5 14 8.5Z" fill="#d8c17c"/><path d="M14 8.5Q20 8 24.5 13.5Q23 22 13.5 30" fill="none" stroke="#c4a65a" stroke-width="1"/><path d="M8.5 13.5Q15 16 20 21.5M12 10.5Q17.5 13 22.5 17.5" fill="none" stroke="#a86f3c" stroke-width="1.8"/></svg>
<svg class="a" style="left:2097px;top:113px" width="22" height="19" viewBox="0 0 22 19"><path d="M0 1.5H21M0 6.5H21M0 11.5H21M0 16.5H21" stroke="#b3b9bf" stroke-width="2"/></svg>
<div class="t" style="left:2128px;top:111px;font-size:21px;line-height:21px;letter-spacing:0.5px">List</div>
<svg class="a" style="left:2175px;top:121px" width="10" height="6"><use href="#caret"/></svg>
<div class="sep" style="left:2199px;top:106px;height:29px"></div>
<svg class="a" style="left:2212px;top:107px" width="28" height="27"><use href="#refresh"/></svg>
<svg class="a" style="left:2248px;top:121px" width="10" height="6"><use href="#caret"/></svg>
<!-- env toolbar 2 -->
<div class="t" style="left:1257px;top:151.5px;font-size:21px;line-height:21px">R</div>
<svg class="a" style="left:1283px;top:160px" width="10" height="6"><use href="#caret"/></svg>
<div class="sep" style="left:1306px;top:146px;height:30px"></div>
<svg class="a" style="left:1321px;top:147px" width="30" height="28" viewBox="0 0 30 28"><rect x="9" y="1" width="14" height="15" rx="2" fill="#b16fce"/><rect x="1" y="7" width="14" height="15" rx="2" fill="#9fcf7e"/><rect x="13" y="11" width="16" height="16" rx="2" fill="#5b90e0"/><rect x="13" y="11" width="10" height="5" fill="#7a7fd0"/><rect x="13" y="16" width="2" height="6" fill="#6da9a8"/></svg>
<div class="t" style="left:1359px;top:152.5px;font-size:21px;line-height:21px;letter-spacing:0.3px">Global Environment</div>
<svg class="a" style="left:1561px;top:160px" width="10" height="6"><use href="#caret"/></svg>
<div class="a" style="left:2030px;top:149px;width:221px;height:32px;border:1px solid #d6dade;border-radius:5px;background:#fff"></div>
<svg class="a" style="left:2041px;top:153px" width="25" height="25" viewBox="0 0 25 25"><circle cx="10" cy="10" r="7.2" fill="none" stroke="#a9b0b6" stroke-width="3.4"/><path d="M15.5 15.5L22.5 22.5" stroke="#a9b0b6" stroke-width="4.2"/></svg>
<!-- values -->
<div class="a" style="left:1243px;top:185px;width:1021px;height:37px;background:#f3f6f8"></div>
<div class="t mono" style="left:1252px;top:193px;font-size:21.8px;line-height:21.8px;transform:scaleY(1.12);transform-origin:0 0">Values</div>
<div class="a" style="left:1243px;top:222px;width:1021px;height:182px;border-top:1px solid #d9dcdf"></div>
<div class="a" style="left:1243px;top:258px;width:1021px;height:1px;background:#d9dcdf"></div>
<div class="a" style="left:1243px;top:295px;width:1021px;height:1px;background:#d9dcdf"></div>
<div class="a" style="left:1243px;top:331px;width:1021px;height:1px;background:#d9dcdf"></div>
<div class="a" style="left:1243px;top:367px;width:1021px;height:1px;background:#d9dcdf"></div>
<div class="a" style="left:1243px;top:403px;width:1021px;height:1px;background:#d9dcdf"></div>
<div class="a" style="left:1534px;top:222px;width:1px;height:182px;background:#d9dcdf"></div>
<div class="a" style="left:2262px;top:222px;width:1px;height:182px;background:#d9dcdf"></div>
<div class="envt mono" style="left:1281px;top:225.5px">test_score
vec
x
y
z</div>
<div class="envt mono" style="left:1543px;top:225.5px">num [1:5] 20 35 40 70 95
num [1:5] 1 2 3 4 5
6
5
30</div>


<!-- FILES pane content -->
<div class="a" style="left:1243px;top:472px;width:78px;height:40px;background:#f3f6f8;border-right:1px solid #d5d9dc;border-radius:7px 0 0 0"></div>
<div class="t" style="left:1258px;top:480px;font-size:21px;line-height:21px;font-weight:bold;color:#1a1a1a;letter-spacing:-0.3px">Files</div>
<div class="t" style="left:1338px;top:480px;font-size:21px;line-height:21px;font-weight:bold;color:#1a1a1a;letter-spacing:0.3px">Plots</div>
<div class="t" style="left:1422px;top:480px;font-size:21px;line-height:21px;font-weight:bold;color:#1a1a1a">Packages</div>
<div class="t" style="left:1551px;top:480px;font-size:21px;line-height:21px;font-weight:bold;color:#1a1a1a">Help</div>
<div class="t" style="left:1630px;top:480px;font-size:21px;line-height:21px;font-weight:bold;color:#1a1a1a;letter-spacing:0.4px">Viewer</div>
<div class="t" style="left:1734px;top:480px;font-size:21px;line-height:21px;font-weight:bold;color:#1a1a1a;letter-spacing:0.1px">Presentation</div>
<svg class="a" style="left:2189px;top:495px" width="25" height="11"><use href="#minbtn"/></svg>
<svg class="a" style="left:2221px;top:485px" width="26" height="22"><use href="#maxbtn"/></svg>
<!-- files toolbar -->
<svg class="a" style="left:1253px;top:519px" width="36" height="28" viewBox="0 0 36 28"><path d="M8 25V5Q8 3 10 3H20L22 1H31Q34 1 34 4V25Z" fill="#e6e6e6" stroke="#c9b46a"/><path d="M6.5 9.5H32.5V26.5H6.5Z" fill="url(#gFolder)" stroke="#c9a94a"/><circle cx="10" cy="10.5" r="9.6" fill="#47a06a" stroke="#fff" stroke-width="1.2"/><path d="M10 5V16M4.5 10.5H15.5" stroke="#fff" stroke-width="4"/></svg>
<div class="t" style="left:1293px;top:523px;font-size:21px;line-height:21px;letter-spacing:0.1px">New Folder</div>
<div class="sep" style="left:1420px;top:516px;height:29px"></div>
<svg class="a" style="left:1432px;top:519px" width="33" height="28" viewBox="0 0 33 28"><rect x="10.5" y="3.5" width="21" height="23" rx="1.5" fill="#fff" stroke="#c4c9cf"/><circle cx="10" cy="10.5" r="9.6" fill="#47a06a" stroke="#fff" stroke-width="1.2"/><path d="M10 5V16M4.5 10.5H15.5" stroke="#fff" stroke-width="4"/></svg>
<div class="t" style="left:1471px;top:523px;font-size:21px;line-height:21px">New File</div>
<svg class="a" style="left:1565px;top:531px" width="10" height="6"><use href="#caret"/></svg>
<div class="sep" style="left:1589px;top:516px;height:29px"></div>
<svg class="a" style="left:1600px;top:519px" width="33" height="28" viewBox="0 0 33 28"><rect x="10.5" y="3.5" width="21" height="23" rx="1.5" fill="#fff" stroke="#c4c9cf"/><circle cx="10" cy="10.5" r="9.6" fill="#c9a13a" stroke="#fff" stroke-width="1.2"/><path d="M10 16V8M5.5 11.5L10 6.5L14.5 11.5" fill="none" stroke="#fff" stroke-width="3"/></svg>
<div class="t" style="left:1641px;top:523px;font-size:21px;line-height:21px;letter-spacing:0.1px">Upload</div>
<div class="sep" style="left:1728px;top:516px;height:29px"></div>
<svg class="a" style="left:1739px;top:519px" width="33" height="28" viewBox="0 0 33 28"><rect x="10.5" y="3.5" width="21" height="23" rx="1.5" fill="#fff" stroke="#c4c9cf"/><circle cx="10" cy="10.5" r="9.6" fill="#c0272d" stroke="#fff" stroke-width="1.2"/><path d="M6.5 7L13.5 14M13.5 7L6.5 14" stroke="#fff" stroke-width="2.8"/></svg>
<div class="t" style="left:1780px;top:523px;font-size:21px;line-height:21px;letter-spacing:0.3px">Delete</div>
<svg class="a" style="left:1863px;top:521px" width="31" height="25" viewBox="0 0 31 25"><rect x="8.5" y="0.5" width="22" height="24" rx="1" fill="#fff" stroke="#c4c9cf"/><rect x="0.5" y="5.5" width="14" height="12" fill="#eef1f4" stroke="#c4c9cf"/><path d="M6 14H15V9L24 16L15 23V18H6Z" fill="#3f8fdc"/></svg>
<div class="t" style="left:1900px;top:523px;font-size:21px;line-height:21px;letter-spacing:-0.5px">Rename</div>
<div class="sep" style="left:1995px;top:516px;height:29px"></div>
<svg class="a" style="left:2011px;top:518px" width="31" height="30" viewBox="0 0 31 30"><g transform="translate(15.5,15)"><path d="M-2.5 -14H2.5L3.5 -9.5L7.5 -7.5L11.5 -10L14.5 -6.5L12 -2.5V2.5L14.5 6.5L11.5 10L7.5 7.5L3.5 9.5L2.5 14H-2.5L-3.5 9.5L-7.5 7.5L-11.5 10L-14.5 6.5L-12 2.5V-2.5L-14.5 -6.5L-11.5 -10L-7.5 -7.5L-3.5 -9.5Z" fill="#6fb0dd" stroke="#4a86b6" stroke-width="1"/><circle r="4.6" fill="#e8f2fa" stroke="#4a86b6"/></g></svg>
<div class="t" style="left:2048px;top:523px;font-size:21px;line-height:21px;letter-spacing:0.2px">More</div>
<svg class="a" style="left:2109px;top:531px" width="10" height="6"><use href="#caret"/></svg>
<svg class="a" style="left:2228px;top:519px" width="28" height="27"><use href="#refresh"/></svg>
<!-- breadcrumb -->
<svg class="a" style="left:1252px;top:561px" width="24" height="23"><use href="#cbox"/></svg>
<svg class="a" style="left:1285px;top:558px" width="38" height="26" viewBox="0 0 38 26"><path d="M7 25.5Q0.5 25.5 0.5 19Q0.5 13 7 12.5Q8 5 15.5 4.5Q21 4.5 23.5 9Q26 6.5 29.5 8Q33 10 32 13.5Q37.5 14.5 37.5 19.5Q37.5 25.5 31 25.5Z" fill="#3b8ed1"/></svg>
<div class="t" style="left:1331px;top:564px;font-size:22px;line-height:22px;color:#1f4fbf">Cloud</div>
<svg class="a" style="left:1399px;top:564px" width="10" height="17" viewBox="0 0 10 17"><path d="M1.5 1.5L8.5 8.5L1.5 15.5" fill="none" stroke="#b9bec4" stroke-width="1.6"/></svg>
<div class="t" style="left:1420px;top:564px;font-size:22px;line-height:22px;color:#1f4fbf;letter-spacing:0.1px">project</div>
<svg class="a" style="left:2188px;top:557px" width="28" height="28" viewBox="0 0 28 28"><path d="M14 1L26.5 7.5V20.5L14 27L1.5 20.5V7.5Z" fill="#b7dcef" stroke="#8cc3dc"/><path d="M1.5 7.5L14 14L26.5 7.5M14 14V27" fill="none" stroke="#8cc3dc"/><text x="9" y="19" font-family="Liberation Serif" font-size="14" fill="#3a6fa8">R</text></svg>
<div class="a" style="left:2228px;top:553px;width:1px;height:38px;background:#d5d9dc"></div>
<svg class="a" style="left:2239px;top:575.5px" width="18" height="4" viewBox="0 0 18 4"><circle cx="2.2" cy="2" r="1.6" fill="#222"/><circle cx="8.7" cy="2" r="1.6" fill="#222"/><circle cx="15.2" cy="2" r="1.6" fill="#222"/></svg>
<!-- header -->
<div class="a" style="left:1296px;top:592px;width:1px;height:33px;background:#d5d9dc"></div>
<div class="a" style="left:1344px;top:592px;width:1px;height:33px;background:#d5d9dc"></div>
<div class="a" style="left:1826px;top:592px;width:1px;height:33px;background:#d5d9dc"></div>
<div class="a" style="left:1972px;top:592px;width:1px;height:33px;background:#d5d9dc"></div>
<div class="a" style="left:2262px;top:592px;width:1px;height:33px;background:#d5d9dc"></div>
<svg class="a" style="left:1354px;top:602px" width="18" height="11" viewBox="0 0 18 11"><path d="M0 11L9 0L18 11Z" fill="#7d8590"/></svg>
<div class="t" style="left:1379px;top:598px;font-size:21px;line-height:21px;color:#3d4650;letter-spacing:0.1px">Name</div>
<div class="t" style="left:1831px;top:598px;font-size:21px;line-height:21px;color:#3d4650;letter-spacing:0.3px">Size</div>
<div class="t" style="left:1977px;top:598px;font-size:21px;line-height:21px;color:#3d4650;letter-spacing:0.4px">Modified</div>
<!-- rows -->
<svg class="a" style="left:1308px;top:630px" width="28" height="25" viewBox="0 0 28 25"><path d="M3 10L12.5 0.5L22 10H16V17H27V24H9V10Z" fill="#5cb878" stroke="#3f9a5c"/></svg>
<div class="t" style="left:1350px;top:637px;font-size:22px;line-height:22px;color:#0c1c9c">..</div>
<svg class="a" style="left:1262px;top:675.0px" width="24" height="24"><use href="#cbox"/></svg>
<div class="a" style="left:1307px;top:669.0px"><svg width="30" height="28" viewBox="0 0 30 28"><path d="M5.5 0.5H19L26.5 8V27.5H5.5Z" fill="#fff" stroke="#b8bcc2"/><path d="M19 0.5V8H26.5" fill="#f1f1f1" stroke="#b8bcc2"/><circle cx="9" cy="12.5" r="7.3" fill="#eef1f6" stroke="#7d8ba0" stroke-width="1.2"/><path d="M8 8V13.5H11.5" fill="none" stroke="#222" stroke-width="1.6"/></svg></div>
<div class="t" style="left:1350px;top:676.9px;font-size:22px;line-height:22px;color:#0c1c9c;letter-spacing:0.55px">.Rhistory</div>
<div class="t" style="left:1833px;top:676.9px;font-size:22px;line-height:22px;color:#111;letter-spacing:0.7px">0 B</div>
<div class="t" style="left:1978px;top:676.9px;font-size:22px;line-height:22px;color:#111;letter-spacing:1.1px">Mar 20, 2026, 6:47 PM</div>
<svg class="a" style="left:1262px;top:714.8px" width="24" height="24"><use href="#cbox"/></svg>
<div class="a" style="left:1307px;top:711.3px"><svg width="30" height="26" viewBox="0 0 30 26"><path d="M3 5L7 1H14L16 3H27Q28.5 3 28.5 5V23H3Z" fill="#e4e4e4" stroke="#c9b46a"/><path d="M0.5 7.5H25.5V25.5H0.5Z" fill="url(#gFolder)" stroke="#c9a94a"/></svg></div>
<div class="t" style="left:1350px;top:716.7px;font-size:22px;line-height:22px;color:#0c1c9c;letter-spacing:0.55px">data</div>
<svg class="a" style="left:1262px;top:754.6px" width="24" height="24"><use href="#cbox"/></svg>
<div class="a" style="left:1307px;top:747.1px"><svg width="30" height="30" viewBox="0 0 30 30"><path d="M15 1L28.5 8V22L15 29L1.5 22V8Z" fill="#b7dcef" stroke="#8cc3dc"/><path d="M1.5 8L15 15L28.5 8M15 15V29" fill="none" stroke="#8cc3dc"/><text x="9.5" y="20" font-family="Liberation Serif" font-size="15" fill="#3a6fa8">R</text></svg></div>
<div class="t" style="left:1350px;top:756.5px;font-size:22px;line-height:22px;color:#0c1c9c;letter-spacing:0.55px">project.Rproj</div>
<div class="t" style="left:1833px;top:756.5px;font-size:22px;line-height:22px;color:#111;letter-spacing:0.7px">205 B</div>
<div class="t" style="left:1978px;top:756.5px;font-size:22px;line-height:22px;color:#111;letter-spacing:1.1px">Apr 14, 2026, 12:32 AM</div>
<svg class="a" style="left:1262px;top:794.4px" width="24" height="24"><use href="#cbox"/></svg>
<div class="a" style="left:1307px;top:789.9px"><svg width="30" height="28" viewBox="0 0 30 28"><rect x="1.5" y="1.5" width="27" height="25" rx="2.5" fill="#fff" stroke="#b8bec6"/><rect x="1.5" y="1.5" width="27" height="5" rx="2" fill="#d6dbe1"/><path d="M1.5 11.5H28.5M1.5 16.5H28.5M1.5 21.5H28.5M8.5 6.5V26.5M15 6.5V26.5M21.5 6.5V26.5" stroke="#c9cfd6" stroke-width="1"/></svg></div>
<div class="t" style="left:1350px;top:796.3px;font-size:22px;line-height:22px;color:#0c1c9c;letter-spacing:0.55px">sample.csv</div>
<div class="t" style="left:1833px;top:796.3px;font-size:22px;line-height:22px;color:#111;letter-spacing:0.7px">22 B</div>
<div class="t" style="left:1978px;top:796.3px;font-size:22px;line-height:22px;color:#111;letter-spacing:1.1px">Apr 6, 2026, 3:44 AM</div>
<svg class="a" style="left:1262px;top:834.2px" width="24" height="24"><use href="#cbox"/></svg>
<div class="a" style="left:1307px;top:830.2px"><svg width="30" height="28" viewBox="0 0 30 28"><path d="M5.5 0.5H19L26.5 8V27.5H5.5Z" fill="#fff" stroke="#b8bcc2"/><path d="M19 0.5V8H26.5" fill="#f1f1f1" stroke="#b8bcc2"/><circle cx="8.5" cy="12" r="7.5" fill="#4a6fa8"/><path d="M6 16V8H9.2Q11.6 8 11.6 10.1Q11.6 12.2 9.2 12.2H6M9 12.2L11.8 16" fill="none" stroke="#fff" stroke-width="1.8"/></svg></div>
<div class="t" style="left:1350px;top:836.1px;font-size:22px;line-height:22px;color:#0c1c9c;letter-spacing:0.55px">sample.R</div>
<div class="t" style="left:1833px;top:836.1px;font-size:22px;line-height:22px;color:#111;letter-spacing:0.7px">46 B</div>
<div class="t" style="left:1978px;top:836.1px;font-size:22px;line-height:22px;color:#111;letter-spacing:1.1px">Apr 6, 2026, 3:50 AM</div>
<svg class="a" style="left:1262px;top:874.0px" width="24" height="24"><use href="#cbox"/></svg>
<div class="a" style="left:1307px;top:870.0px"><svg width="30" height="28" viewBox="0 0 30 28"><path d="M5.5 0.5H19L26.5 8V27.5H5.5Z" fill="#fff" stroke="#b8bcc2"/><path d="M19 0.5V8H26.5" fill="#f1f1f1" stroke="#b8bcc2"/><circle cx="8.5" cy="12" r="7.5" fill="#4a6fa8"/><path d="M6 16V8H9.2Q11.6 8 11.6 10.1Q11.6 12.2 9.2 12.2H6M9 12.2L11.8 16" fill="none" stroke="#fff" stroke-width="1.8"/></svg></div>
<svg class="a" style="left:1350px;top:877.0px" width="22" height="22" viewBox="0 0 22 22"><g fill="none" stroke="#0c1c9c" stroke-width="2"><path d="M3 1L1 5M4 3H9M13 1L11 5M14 3H20M3 7.5H18V11.5H3V15.5H19Q19 20 16 21M10.5 6V21.5M9 13Q6 18 1.5 20"/></g></svg><div class="t" style="left:1372px;top:875.9px;font-size:22px;line-height:22px;color:#0c1c9c">2</div><svg class="a" style="left:1386px;top:877.0px" width="22" height="22" viewBox="0 0 22 22"><g fill="none" stroke="#0c1c9c" stroke-width="2"><rect x="2" y="1.5" width="17" height="19"/><rect x="6.8" y="6.5" width="7.4" height="8"/></g></svg><div class="t" style="left:1408px;top:875.9px;font-size:22px;line-height:22px;color:#0c1c9c;letter-spacing:0.5px">.R</div>
<div class="t" style="left:1833px;top:875.9px;font-size:22px;line-height:22px;color:#111;letter-spacing:0.7px">231 B</div>
<div class="t" style="left:1978px;top:875.9px;font-size:22px;line-height:22px;color:#111;letter-spacing:1.1px">Apr 13, 2026, 2:44 PM</div>


<!-- window bottom edge -->
<div class="a" style="left:0;top:1297px;width:2274px;height:1px;background:#fff"></div>
<svg class="a" style="left:2200px;top:1270px" width="74" height="30" viewBox="0 0 74 30"><path d="M40 27.5C58 27.5 68 22 74 12.5V30H40Z" fill="#1d1e21"/><path d="M40 27.5C58 27.5 68 22 74 12.5" fill="none" stroke="#fff" stroke-width="1"/></svg>
<div class="a" style="left:0;top:1298px;width:2274px;height:2px;background:#121316"></div>

</body></html>
